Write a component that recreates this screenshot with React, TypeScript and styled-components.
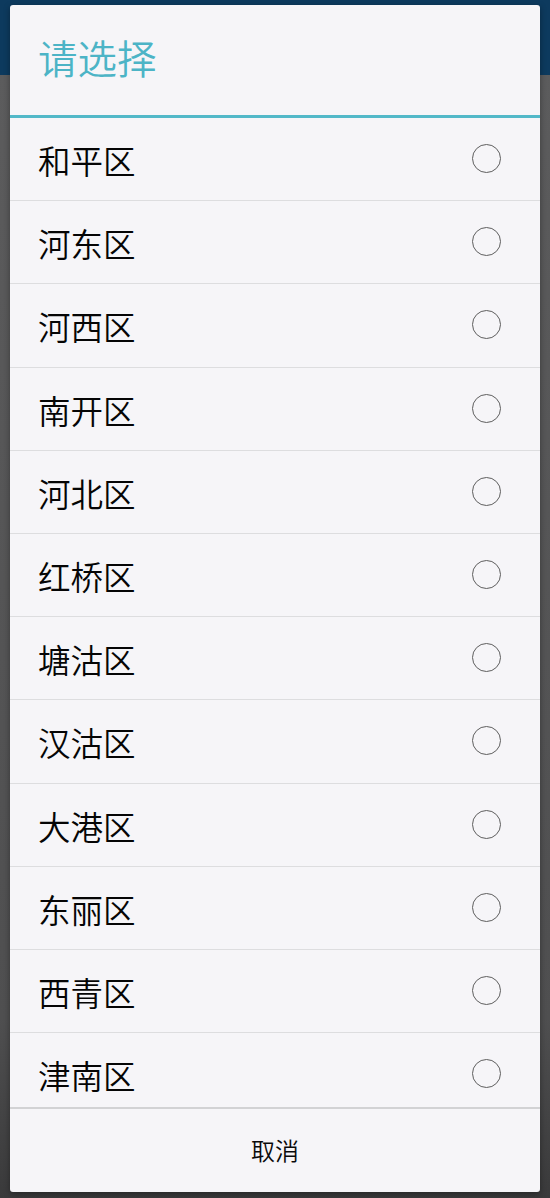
import React from "react";
import styled, { createGlobalStyle } from "styled-components";

const Global = createGlobalStyle`
  html, body { margin: 0; padding: 0; }
  body {
    width: 550px;
    height: 1198px;
    overflow: hidden;
    background: #5b5b5c;
    font-family: "Noto Sans CJK SC", "Noto Sans", sans-serif;
  }
`;

const Page = styled.div`
  position: relative;
  width: 550px;
  height: 1198px;
  display: flex;
  flex-direction: column;
  background: linear-gradient(#5d5d5e, #4f4f50 85%, #3a3a3b);
`;

const TopBar = styled.div`
  height: 75px;
  background: #0d3a5e;
  flex-shrink: 0;
`;

const Dialog = styled.div`
  position: absolute;
  left: 10px;
  top: 5px;
  width: 530px;
  height: 1187px;
  background: #f6f5f8;
  border-radius: 3px;
  box-shadow: 0 2px 6px rgba(0, 0, 0, 0.35);
  display: flex;
  flex-direction: column;
  overflow: hidden;
`;

const Header = styled.div`
  height: 113px;
  flex-shrink: 0;
  display: flex;
  align-items: center;
  padding: 0 0 8px 28px;
  box-sizing: border-box;
  color: #4cb4c6;
  font-size: 39.5px;
  font-weight: 350;
  border-bottom: 3px solid #52b8c8;
`;

const List = styled.div`
  height: 989px;
  flex-shrink: 0;
  overflow: hidden;
  border-bottom: 2px solid #d2d2d4;
`;

const Row = styled.div`
  height: 83.2px;
  box-sizing: border-box;
  display: flex;
  align-items: center;
  justify-content: space-between;
  padding: 1px 39px 0 28px;
  border-bottom: 1px solid #dddddf;
  font-size: 32.5px;
  font-weight: 350;
  color: #050505;
`;

const Radio = styled.span`
  width: 27px;
  height: 27px;
  border-radius: 50%;
  border: 1.6px solid #5e5e5e;
  flex-shrink: 0;
  margin-top: -2px;
`;

const Cancel = styled.div`
  flex: 1;
  display: flex;
  align-items: center;
  justify-content: center;
  font-size: 24px;
  font-weight: 350;
  color: #0a0a0a;
  padding-bottom: 2px;
`;

const districts = [
  "和平区",
  "河东区",
  "河西区",
  "南开区",
  "河北区",
  "红桥区",
  "塘沽区",
  "汉沽区",
  "大港区",
  "东丽区",
  "西青区",
  "津南区",
];

export default function App() {
  return (
    <>
      <Global />
      <Page>
        <TopBar />
        <Dialog>
          <Header>请选择</Header>
          <List>
            {districts.map((d) => (
              <Row key={d}>
                <span>{d}</span>
                <Radio />
              </Row>
            ))}
          </List>
          <Cancel>取消</Cancel>
        </Dialog>
      </Page>
    </>
  );
}
